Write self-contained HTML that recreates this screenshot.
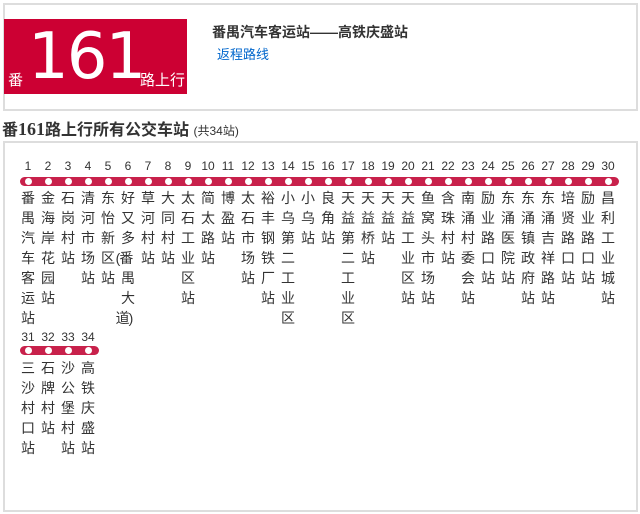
<html><head><style>
body{margin:0;width:640px;height:514px;background:#fff;font-family:"Liberation Sans","Noto Sans CJK SC",sans-serif;position:relative;overflow:hidden}
.box{position:absolute;border:2px solid #ddd;box-sizing:border-box}
.col{position:absolute;width:20px;text-align:center;font-size:14px;line-height:20px;color:#333;white-space:nowrap}
.num{position:absolute;width:20px;text-align:center;font-size:12px;color:#333}
.bar{position:absolute;height:9px;background:#c8214b;border-radius:5px}
.dot{position:absolute;width:7px;height:7px;border-radius:50%;background:#fff}
</style></head><body>
<div class="box" style="left:3px;top:3px;width:635px;height:108px"></div>
<div style="position:absolute;left:4px;top:19px;width:183px;height:75px;background:#cc0033;color:#fff">
<span style="position:absolute;left:4px;top:50px;font-size:15px">番</span>
<span style="position:absolute;left:24px;top:0px;font-size:64px;font-family:'DejaVu Sans',sans-serif;line-height:76px;letter-spacing:-2px">161</span>
<span style="position:absolute;left:136px;top:50px;font-size:15px">路上行</span>
</div>
<div style="position:absolute;left:212px;top:22px;font-size:14px;font-weight:bold;color:#333">番禺汽车客运站——高铁庆盛站</div>
<div style="position:absolute;left:217px;top:44px;font-size:13px;color:#0066cc">返程路线</div>
<div style="position:absolute;left:2px;top:116px;font-size:16px;font-weight:bold;color:#333">番<span style="font-family:'Liberation Serif',serif;font-size:18px">161</span>路上行所有公交车站 <span style="font-size:12px;font-weight:normal">(共34站)</span></div>
<div class="box" style="left:3px;top:141px;width:635px;height:371px"></div>
<div id="c"></div>
<script>
var n=["番禺汽车客运站","金海岸花园站","石岗村站","清河市场站","东怡新区站","好又多|(番|禺|大|道)","草河村站","大同村站","太石工业区站","简太路站","博盈站","太石市场站","裕丰钢铁厂站","小乌第二工业区","小乌站","良角站","天益第二工业区","天益桥站","天益站","天益工业区站","鱼窝头市场站","含珠村站","南涌村委会站","励业路口站","东涌医院站","东涌镇政府站","东涌吉祥路站","培贤路口站","励业路口站","昌利工业城站","三沙村口站","石牌村站","沙公堡村站","高铁庆盛站"];
var h="";
h+='<div class="bar" style="left:20px;top:177px;width:599px"></div>';
h+='<div class="bar" style="left:20px;top:346px;width:79px"></div>';
for(var i=0;i<34;i++){var r=i<30?0:1,k=i<30?i:i-30,x=18+k*20,yn=r?330:159,yb=r?347:178,yc=r?358:188;
h+='<div class="num" style="left:'+x+'px;top:'+yn+'px">'+(i+1)+'</div>';
h+='<div class="dot" style="left:'+(x+6.5)+'px;top:'+(yb)+'px"></div>';
var parts=n[i].indexOf("|")>=0?(function(s){var a=s.split("|");return Array.from(a[0]).concat(a.slice(1));})(n[i]):Array.from(n[i]);
var cs=parts.map(function(c){return c.length>1?'<span style="margin-left:-8px;letter-spacing:-1px">'+c+'</span>':c;}).join("<br>");
h+='<div class="col" style="left:'+x+'px;top:'+yc+'px">'+cs+'</div>';}
document.getElementById("c").innerHTML=h;
</script>
</body></html>
